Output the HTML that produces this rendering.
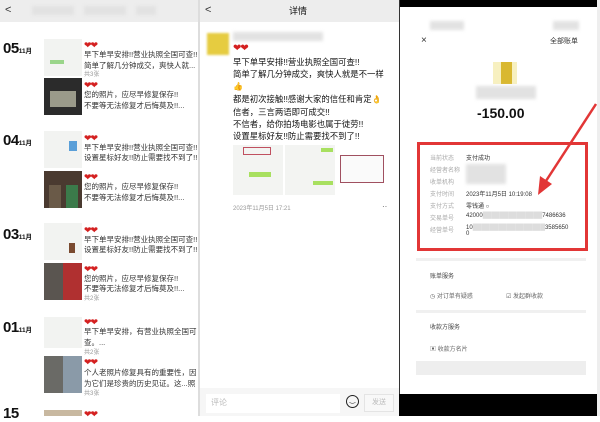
<!DOCTYPE html>
<html><head><meta charset="utf-8"><style>
*{margin:0;padding:0;box-sizing:border-box}
body{width:600px;height:416px;overflow:hidden;background:#fff;position:relative;font-family:"Liberation Sans","Noto Sans CJK SC",sans-serif;color:#222}
.a{position:absolute}
.t{position:absolute;font-size:7.5px;line-height:10px;white-space:nowrap;color:#333}
.g{color:#999}
.date{position:absolute;left:3px;font-size:15px;font-weight:bold;color:#111;letter-spacing:-0.5px}
.date small{font-size:6.5px;font-weight:bold;letter-spacing:0}
.th{position:absolute;left:44px;width:38px;height:37px;background:#f2f3f1}
.hr{position:absolute;font-size:9px;line-height:10px;color:#d42020;letter-spacing:-1px}
.lbl{position:absolute;left:430px;font-size:6px;color:#aaa}
.val{position:absolute;left:466px;font-size:6px;color:#333}
.blur{position:absolute;background:#e2e2e2;filter:blur(1.5px)}
</style></head><body>
<!-- Panel 1 -->
<div class="a" style="left:0;top:0;width:198px;height:22px;background:#ededed"></div>
<div class="t" style="left:5px;top:5px;font-size:11px;color:#333">&lt;</div>
<div class="blur" style="left:32px;top:6px;width:42px;height:9px"></div>
<div class="blur" style="left:84px;top:6px;width:42px;height:9px"></div>
<div class="blur" style="left:136px;top:6px;width:20px;height:9px"></div>

<div class="date" style="top:40px">05<small>11月</small></div>
<div class="th" style="top:39px"><div class="a" style="left:6px;top:21px;width:14px;height:4px;background:#9ad58a"></div></div>
<div class="th" style="top:78px;background:#2b2b2b"><div class="a" style="left:6px;top:13px;width:26px;height:16px;background:#9a9a8a"></div></div>
<div class="hr" style="left:84px;top:40px">❤❤</div>
<div class="t" style="left:84px;top:50px">早下单早安排!!营业执照全国可查!!</div>
<div class="t" style="left:84px;top:61px">简单了解几分钟成交，爽快人就...</div>
<div class="t g" style="left:84px;top:70px;font-size:6px">共3张</div>
<div class="hr" style="left:84px;top:80px">❤❤</div>
<div class="t" style="left:84px;top:90px">您的照片，应尽早修复保存!!</div>
<div class="t" style="left:84px;top:101px">不要等无法修复才后悔莫及!!...</div>

<div class="date" style="top:132px">04<small>11月</small></div>
<div class="th" style="top:131px"><div class="a" style="left:25px;top:10px;width:8px;height:10px;background:#5a9fd8"></div></div>
<div class="th" style="top:171px;background:#4a3a30"><div class="a" style="left:22px;top:14px;width:12px;height:23px;background:#3b7a4a"></div><div class="a" style="left:5px;top:14px;width:12px;height:23px;background:#6a5a48"></div></div>
<div class="hr" style="left:84px;top:133px">❤❤</div>
<div class="t" style="left:84px;top:143px">早下单早安排!!营业执照全国可查!!</div>
<div class="t" style="left:84px;top:153px">设置星标好友!!防止需要找不到了!!</div>
<div class="hr" style="left:84px;top:172px">❤❤</div>
<div class="t" style="left:84px;top:182px">您的照片，应尽早修复保存!!</div>
<div class="t" style="left:84px;top:193px">不要等无法修复才后悔莫及!!...</div>

<div class="date" style="top:226px">03<small>11月</small></div>
<div class="th" style="top:223px"><div class="a" style="left:25px;top:20px;width:6px;height:10px;background:#7a4a30"></div></div>
<div class="th" style="top:263px;width:19px;background:#5a5550"></div>
<div class="th" style="top:263px;left:63px;width:19px;background:#b03030"></div>
<div class="hr" style="left:84px;top:225px">❤❤</div>
<div class="t" style="left:84px;top:235px">早下单早安排!!营业执照全国可查!!</div>
<div class="t" style="left:84px;top:245px">设置星标好友!!防止需要找不到了!!</div>
<div class="hr" style="left:84px;top:264px">❤❤</div>
<div class="t" style="left:84px;top:274px">您的照片，应尽早修复保存!!</div>
<div class="t" style="left:84px;top:284px">不要等无法修复才后悔莫及!!...</div>
<div class="t g" style="left:84px;top:294px;font-size:6px">共2张</div>

<div class="date" style="top:319px">01<small>11月</small></div>
<div class="th" style="top:317px;height:31px"></div>
<div class="th" style="top:356px;width:19px;background:#6a6a66"></div>
<div class="th" style="top:356px;left:63px;width:19px;background:#8a9aa8"></div>
<div class="hr" style="left:84px;top:317px">❤❤</div>
<div class="t" style="left:84px;top:327px">早下单早安排，有营业执照全国可</div>
<div class="t" style="left:84px;top:338px">查。...</div>
<div class="t g" style="left:84px;top:348px;font-size:6px">共2张</div>
<div class="hr" style="left:84px;top:357px">❤❤</div>
<div class="t" style="left:84px;top:368px">个人老照片修复具有的重要性，因</div>
<div class="t" style="left:84px;top:379px">为它们是珍贵的历史见证。这...照</div>
<div class="t g" style="left:84px;top:389px;font-size:6px">共3张</div>
<div class="date" style="top:405px">15</div>
<div class="th" style="top:410px;height:6px;background:#c8b8a0"></div>
<div class="hr" style="left:84px;top:409px">❤❤</div>

<!-- Panel 2 -->
<div class="a" style="left:198px;top:0;width:2px;height:416px;background:#ddd"></div>
<div class="a" style="left:200px;top:0;width:199px;height:22px;background:#ededed"></div>
<div class="t" style="left:205px;top:5px;font-size:11px">&lt;</div>
<div class="t" style="left:289px;top:5px;font-size:9px;line-height:12px;color:#111">详情</div>
<div class="a" style="left:207px;top:33px;width:22px;height:22px;background:#e6cc40;filter:blur(1px)"></div>
<div class="blur" style="left:233px;top:32px;width:90px;height:9px"></div>
<div class="hr" style="left:233px;top:43px;font-size:10px;line-height:12px">❤❤</div>
<div class="t" style="left:233px;top:56px;font-size:8.4px;line-height:12px;color:#111">早下单早安排!!营业执照全国可查!!<br>简单了解几分钟成交，爽快人就是不一样<br><span style="color:#d8a020;font-size:8px">👍</span><br>都是初次接触!!感谢大家的信任和肯定<span style="color:#d8a020;font-size:8px">👌</span><br>信者，三言两语即可成交!!<br>不信者，给你拍场电影也属于徒劳!!<br>设置星标好友!!防止需要找不到了!!</div>
<div class="a" style="left:233px;top:145px;width:50px;height:50px;background:#f3f4f2"><div class="a" style="left:16px;top:27px;width:22px;height:5px;background:#a8e060"></div><div class="a" style="left:10px;top:2px;width:28px;height:8px;border:1px solid #c05060"></div></div>
<div class="a" style="left:285px;top:145px;width:50px;height:50px;background:#f3f4f2"><div class="a" style="left:36px;top:3px;width:12px;height:4px;background:#a8e060"></div><div class="a" style="left:28px;top:36px;width:20px;height:4px;background:#a8e060"></div></div>
<div class="a" style="left:340px;top:155px;width:44px;height:28px;border:1px solid #a05060;background:#fafafa"></div>
<div class="t g" style="left:233px;top:204px;font-size:6px">2023年11月5日 17:21</div>
<div class="t" style="left:382px;top:202px;font-size:8px;color:#555">··</div>
<div class="a" style="left:200px;top:388px;width:199px;height:28px;background:#f6f6f6"></div>
<div class="a" style="left:206px;top:394px;width:134px;height:19px;background:#fff"></div>
<div class="t" style="left:211px;top:398px;font-size:8px;color:#bbb">评论</div>
<div class="a" style="left:346px;top:395px;width:13px;height:13px;border:1.2px solid #222;border-radius:50%;text-align:center;font-size:7px;line-height:10px">‿</div>
<div class="a" style="left:364px;top:394px;width:30px;height:18px;border:1px solid #e4e4e4;background:#f8f8f8;font-size:7px;color:#bbb;text-align:center;line-height:16px">发送</div>

<!-- Panel 3 -->
<div class="a" style="left:399px;top:0;width:201px;height:7px;background:#000"></div>
<div class="a" style="left:399px;top:0;width:1px;height:416px;background:#333"></div>
<div class="a" style="left:597px;top:0;width:3px;height:416px;background:#eee"></div>
<div class="blur" style="left:430px;top:21px;width:34px;height:9px"></div>
<div class="blur" style="left:553px;top:21px;width:26px;height:9px"></div>
<div class="t" style="left:421px;top:36px;font-size:10px;color:#333">×</div>
<div class="t" style="left:550px;top:37px;font-size:7px;color:#333">全部账单</div>
<div class="a" style="left:493px;top:62px;width:24px;height:22px;background:#f7f0c0"></div>
<div class="a" style="left:501px;top:62px;width:11px;height:22px;background:#d9b830"></div>
<div class="blur" style="left:476px;top:86px;width:60px;height:13px"></div>
<div class="t" style="left:477px;top:104px;font-size:14px;line-height:18px;font-weight:bold;color:#111">-150.00</div>
<div class="a" style="left:417px;top:142px;width:171px;height:109px;border:3px solid #e23636"></div>
<div class="lbl" style="top:153px">当前状态</div><div class="val" style="top:153px">支付成功</div>
<div class="lbl" style="top:165px">经营者名称</div>
<div class="lbl" style="top:177px">收单机构</div>
<div class="blur" style="left:466px;top:164px;width:40px;height:20px"></div>
<div class="lbl" style="top:189px">支付时间</div><div class="val" style="top:189px">2023年11月5日 10:19:08</div>
<div class="lbl" style="top:201px">支付方式</div><div class="val" style="top:201px">零钱通 ○</div>
<div class="lbl" style="top:213px">交易单号</div><div class="val" style="top:213px">42000<span style="color:#ddd">██████████████</span>7486636</div>
<div class="lbl" style="top:225px">经营单号</div><div class="val" style="top:225px">10<span style="color:#ddd">█████████████████</span>3585650<br>0</div>
<svg class="a" style="left:530px;top:100px" width="70" height="100"><line x1="66" y1="4" x2="14" y2="84" stroke="#e23636" stroke-width="2.5"/><polygon points="8,95 10,76 22,84" fill="#e23636"/></svg>
<div class="a" style="left:416px;top:258px;width:170px;height:3px;background:#f0f0f0"></div>
<div class="lbl" style="top:271px;color:#444">账单服务</div>
<div class="t" style="left:430px;top:292px;font-size:6px;color:#666">◷ 对订单有疑惑</div>
<div class="t" style="left:506px;top:292px;font-size:6px;color:#666">☑ 发起群收款</div>
<div class="a" style="left:416px;top:310px;width:170px;height:3px;background:#f0f0f0"></div>
<div class="lbl" style="top:322px;color:#444">收款方服务</div>
<div class="t" style="left:430px;top:345px;font-size:6px;color:#666">▣ 收款方名片</div>
<div class="a" style="left:416px;top:361px;width:170px;height:14px;background:#eee"></div>
<div class="a" style="left:399px;top:394px;width:198px;height:22px;background:#000"></div>
</body></html>
